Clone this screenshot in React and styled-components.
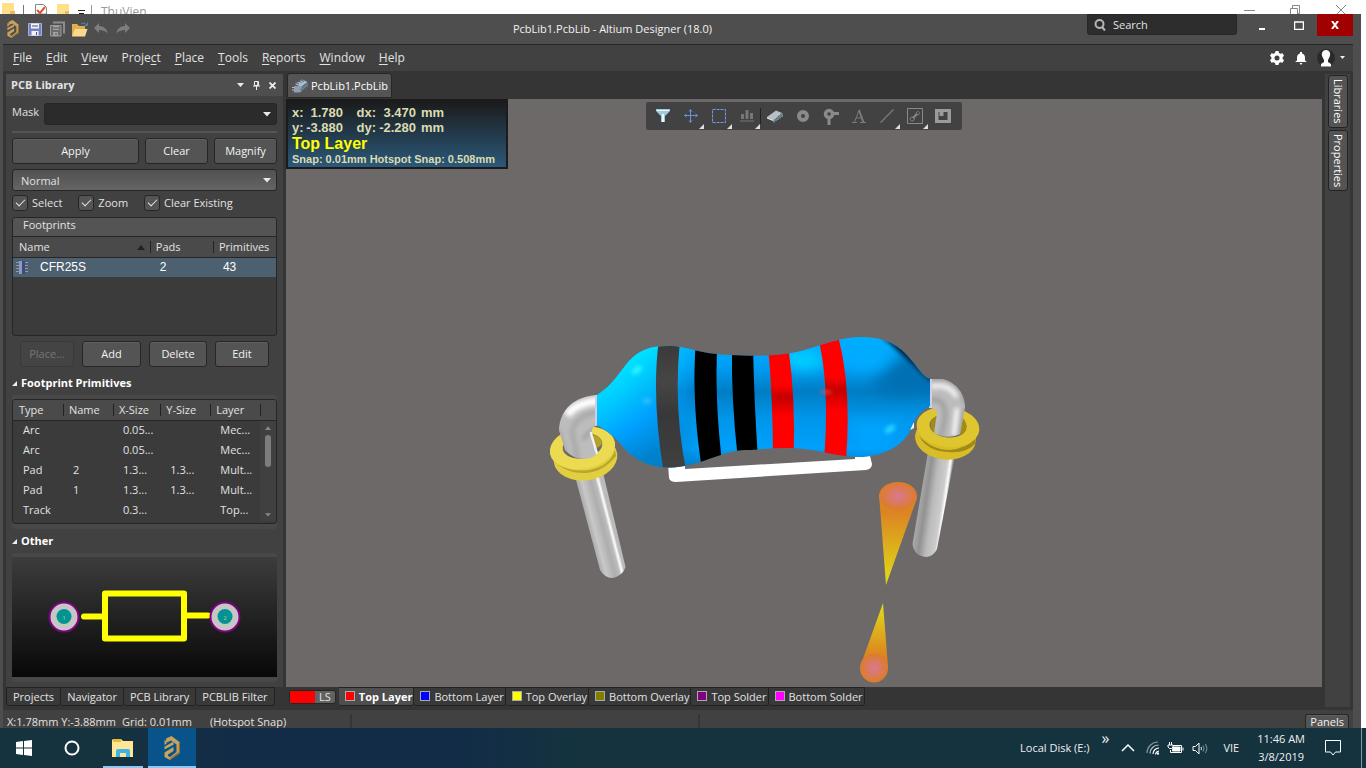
import React from "react";
import styled, { createGlobalStyle, css } from "styled-components";

const ui = `"Open Sans", "Noto Sans", sans-serif`;

const GlobalStyle = createGlobalStyle`
  * { box-sizing: border-box; }
  body { margin: 0; background: #fff; font: 11px/16px ${ui}; color: #e2e2e2; }
  button, input, select { font: inherit; color: inherit; margin: 0; }
  button { cursor: pointer; }
  svg { display: block; flex: none; }
`;

const Screen = styled.div`
  height: 100vh;
  display: flex;
  flex-direction: column;
  overflow: hidden;
`;

/* window behind */
const BackWindow = styled.div`
  height: 14px;
  flex: none;
  overflow: hidden;
  display: flex;
  align-items: flex-start;
  color: #999;
  font-size: 12px;
  line-height: 24px;
`;
const BackTools = styled.div`flex: 1; display: flex; gap: 9px; padding-left: 2px;`;
const BackControls = styled.div`display: flex; gap: 34px; padding: 5px 19px 0 0;`;

/* application window */
const Win = styled.div`
  flex: 1;
  min-height: 0;
  margin-right: 5px;
  display: flex;
  flex-direction: column;
  background: #353535;
  border: solid #4e4e4e;
  border-width: 0 8px 0 3px;
`;
const TitleBar = styled.header`
  display: flex;
  height: 31px;
  flex: none;
  background: #4e4e4e;
  border-bottom: 1px solid #262626;
`;
const QuickTools = styled.div`
  display: flex;
  align-items: center;
  gap: 4px;
  padding-left: 1px;
`;
const IconButton = styled.button`
  display: flex;
  align-items: center;
  justify-content: center;
  width: ${(p) => p.$w || 18}px;
  height: ${(p) => p.$h || 18}px;
  padding: 0;
  border: 0;
  background: ${(p) => p.$bg || "none"};
`;
const Title = styled.h1`
  flex: 1;
  margin: 0;
  padding-left: 6px;
  font-size: 11px;
  font-weight: 400;
  line-height: 30px;
  text-align: center;
  color: #f2f2f2;
`;
const SearchBox = styled.label`
  display: flex;
  align-items: center;
  gap: 7px;
  width: 150px;
  height: 21px;
  margin-right: 6px;
  padding: 0 6px;
  background: #2d2d2d;
  border: 1px solid #262626;
  border-radius: 0 0 3px 3px;
  input {
    flex: 1;
    min-width: 0;
    padding: 0;
    border: 0;
    background: none;
    outline: 0;
  }
  input::placeholder { color: #e2e2e2; opacity: 1; }
`;
const MenuBar = styled.nav`
  display: flex;
  align-items: center;
  height: 26px;
  flex: none;
  padding: 0 7px 0 10px;
  background: #414141;
`;
const MenuItem = styled.button`
  padding: 0;
  margin-right: 14px;
  border: 0;
  background: none;
  font-size: 12px;
  u { text-underline-offset: 2px; }
`;
const MenuRight = styled.div`
  display: flex;
  align-items: center;
  gap: 6px;
  margin-left: auto;
`;
const Work = styled.div`flex: 1; min-height: 0; display: flex;`;

/* left dock */
const LeftDock = styled.aside`
  display: flex;
  flex-direction: column;
  width: 280px;
  flex: none;
  padding: 3px 0 4px 3px;
`;
const Panel = styled.section`
  flex: 1;
  min-height: 0;
  display: flex;
  flex-direction: column;
  background: #414141;
`;
const PanelHeader = styled.header`
  display: flex;
  align-items: center;
  height: 22px;
  padding: 0 3px 0 5px;
  background: #4e4e4e;
  h2 { flex: 1; margin: 0; font-size: 11px; font-weight: 700; }
`;
const PanelBody = styled.div`
  flex: 1;
  min-height: 0;
  display: flex;
  flex-direction: column;
  padding: 7px 6px 5px;
`;
const FieldRow = styled.label`
  display: flex;
  align-items: flex-start;
  gap: 5px;
  height: 22px;
  line-height: 18px;
`;
const Combo = styled.div`
  position: relative;
  flex: 1;
  display: flex;
  svg { position: absolute; right: 6px; top: 9px; pointer-events: none; }
`;
const fieldStyle = css`
  width: 100%;
  height: 22px;
  border: 1px solid #262626;
  border-radius: 3px;
  outline: 0;
`;
const MaskInput = styled.input`${fieldStyle} background: #2b2b2b;`;
const ModeSelect = styled.select`
  ${fieldStyle}
  appearance: none;
  padding: 2px 8px 0;
  background: linear-gradient(#515151, #646464);
`;
const Rule = styled.hr`
  width: 100%;
  height: 2px;
  margin: 6px 0 5px;
  border: 0;
  background: #555;
`;
const Buttons = styled.div`
  display: grid;
  grid-template-columns: ${(p) => p.$cols};
  gap: ${(p) => p.$gap}px;
  margin-bottom: 5px;
`;
const FootActions = styled(Buttons)`margin: 5px 0 4px; padding: 0 8px;`;
const Button = styled.button`
  height: 26px;
  padding: 0;
  border: 1px solid #262626;
  border-radius: 3px;
  background: #545454;
  box-shadow: inset 0 1px #606060;
  color: #f2f2f2;
  &:disabled { background: #444; box-shadow: none; border-color: #393939; color: #777; }
`;
const Checks = styled.div`
  display: flex;
  gap: 16px;
  margin: 4px 0 6px;
`;
const Check = styled.label`
  display: flex;
  align-items: center;
  gap: 4px;
  line-height: 18px;
  height: 16px;
  input {
    appearance: none;
    width: 16px;
    height: 16px;
    border: 1px solid #262626;
    border-radius: 3px;
    background: #545454;
  }
  input:checked::after {
    content: "";
    display: block;
    width: 4px;
    height: 8px;
    margin: 1px 0 0 5px;
    border: solid #e2e2e2;
    border-width: 0 1px 1px 0;
    transform: rotate(45deg);
  }
`;
const ListBox = styled.div`
  height: ${(p) => p.$h}px;
  flex: none;
  border: 1px solid #262626;
  border-radius: 3px;
  background: #3b3b3b;
  overflow: hidden;
`;
const ListTitle = styled.h3`
  height: 19px;
  margin: 0;
  padding-left: 10px;
  background: #545454;
  border-bottom: 1px solid #262626;
  font-size: 11px;
  font-weight: 400;
  line-height: 14px;
`;
const Grid = styled.table`
  width: 100%;
  border-collapse: collapse;
  table-layout: fixed;
  th, td {
    height: 20px;
    padding: 0 0 0 10px;
    font-weight: 400;
    text-align: left;
    white-space: nowrap;
  }
  th { padding: 0 0 0 6px; }
  thead tr { background: #4a4a4a; border-bottom: 1px solid #262626; }
  th + th { background: linear-gradient(#222, #222) 0 4px / 1px 12px no-repeat; }
  th svg { float: right; margin: 6px 5px 0 0; }
`;
const SelectedRow = styled.tr`
  background: #4d6070;
  color: #fff;
  font: 12px/16px "Liberation Sans", sans-serif;
`;
const NameCell = styled.div`display: flex; align-items: center; gap: 11px; margin-left: -8px;`;
const ScrollCell = styled.td`
  && { padding: 4px 2px; vertical-align: top; background: #404040; }
`;
const ScrollTrack = styled.div`
  display: flex;
  flex-direction: column;
  align-items: center;
  gap: 5px;
  height: 92px;
  padding-top: 1px;
  svg:last-child { margin-top: auto; }
`;
const Thumb = styled.div`width: 6px; height: 32px; border-radius: 3px; background: #7d7d7d;`;
const SectionTitle = styled.h3`
  display: flex;
  align-items: center;
  gap: 4px;
  height: 22px;
  flex: none;
  margin: 1px 0;
  color: #fff;
  font-size: 11px;
  font-weight: 700;
`;
const Group = styled.div`
  flex: ${(p) => (p.$grow ? "1" : "none")};
  min-height: 0;
  display: flex;
  flex-direction: column;
  padding: 4px 0 5px;
  border-radius: 3px;
  background: #484848;
`;
const Preview = styled.div`
  flex: 1;
  min-height: 0;
  background: linear-gradient(#3c3c3c, #080808);
  svg { width: 100%; height: 100%; }
`;
const DockTabs = styled.div`display: flex;`;
const DockTab = styled.button`
  height: 19px;
  padding: 0 6px;
  border: 1px solid #222;
  border-left-width: ${(p) => (p.$first ? 1 : 0)}px;
  border-radius: 0 0 3px 3px;
  background: #393939;
  line-height: 16px;
`;

/* document area */
const Document = styled.main`flex: 1; min-width: 0; display: flex; flex-direction: column; margin-left: 3px;`;
const FileTabs = styled.div`display: flex; align-items: flex-end; height: 28px; flex: none;`;
const FileTab = styled.button`
  display: flex;
  align-items: center;
  gap: 2px;
  height: 25px;
  margin: 0 0 1px 1px;
  padding: 0 3px 0 4px;
  border: 1px solid #262626;
  border-radius: 3px 3px 0 0;
  background: #545454;
  color: #fff;
`;
const Canvas = styled.div`
  position: relative;
  flex: 1;
  min-height: 0;
  background: #6d6968;
`;
const Model = styled.svg`position: absolute; inset: 0; width: 100%; height: 100%;`;
const Hud = styled.div`
  position: absolute;
  left: 0;
  top: 0;
  width: 222px;
  padding: 4px 3px 2px 4px;
  border: 2px solid #1b1b1b;
  background: linear-gradient(#1b1b1b, #2b587a);
  color: #dcdcaf;
  font: 700 13px/15px "Liberation Sans", sans-serif;
`;
const Coords = styled.div`
  display: grid;
  grid-template-columns: 12px 39px 33px 40px 30px;
  span:nth-child(5n + 2), span:nth-child(5n + 3), span:nth-child(5n + 4) { text-align: right; }
  span:nth-child(5n) { padding-left: 5px; }
`;
const HudLayer = styled.div`font-size: 16px; line-height: 18px; color: #ff0;`;
const HudSnap = styled.div`font-size: 11px; line-height: 12px; white-space: nowrap;`;
const ActiveBar = styled.div`
  position: absolute;
  left: 50%;
  top: 3px;
  display: flex;
  transform: translateX(-50%);
  padding: 0 5px 0 3px;
  border-radius: 2px;
  background: #424242;
`;
const Tool = styled.button`
  position: relative;
  display: flex;
  align-items: center;
  justify-content: center;
  width: 28px;
  height: 28px;
  padding: 0;
  border: 0;
  background: ${(p) => (p.$divide ? "linear-gradient(#222, #222) 100% 6px / 1px 16px no-repeat" : "none")};
  ${(p) => p.$more && css`
    &::after {
      content: "";
      position: absolute;
      right: 1px;
      bottom: 1px;
      width: 5px;
      height: 5px;
      background: #ddd;
      clip-path: polygon(100% 0, 100% 100%, 0 100%);
    }
  `}
`;
const LayerBar = styled.div`display: flex; height: 23px; flex: none; padding-left: 3px;`;
const LayerSet = styled.button`
  display: flex;
  height: 14px;
  margin: 3px 3px 0 0;
  padding: 0;
  border: 1px solid #262626;
  border-radius: 3px;
  background: #626262;
  line-height: 12px;
  overflow: hidden;
  &::before { content: ""; width: 25px; height: 12px; background: #f00; }
  span { padding: 0 4px; }
`;
const LayerTab = styled.button`
  display: flex;
  align-items: center;
  gap: 4px;
  height: 19px;
  padding: 0 1px 0 6px;
  border: 1px solid #222;
  border-width: 1px 1px 1px 0;
  border-radius: 0 0 3px 3px;
  background: ${(p) => (p.$active ? "#4e4e4e" : "#393939")};
  color: ${(p) => (p.$active ? "#fff" : "#e2e2e2")};
  font-weight: ${(p) => (p.$active ? 700 : 400)};
  white-space: nowrap;
  &::before {
    content: "";
    box-sizing: border-box;
    width: 10px;
    height: 10px;
    margin-bottom: 2px;
    border: 1px solid #aaa;
    background: ${(p) => p.$color};
  }
`;

/* right dock and status */
const RightDock = styled.aside`
  display: flex;
  flex-direction: column;
  align-items: center;
  gap: 2px;
  width: 25px;
  flex: none;
  margin: 3px;
  padding-top: 1px;
  background: #414141;
`;
const SideTab = styled.button`
  width: 20px;
  padding: 3px 0;
  border: 1px solid #222;
  border-radius: 3px;
  background: #545454;
  color: #fff;
  line-height: 16px;
  writing-mode: vertical-rl;
`;
const StatusBar = styled.footer`
  display: flex;
  height: 18px;
  flex: none;
  padding-left: 4px;
  background: #414141;
  line-height: 24px;
  overflow: hidden;
`;
const StatusText = styled.span`width: ${(p) => p.$w}px; white-space: nowrap;`;
const StatusCell = styled.div`
  width: ${(p) => p.$w}px;
  height: 14px;
  margin-top: 4px;
  border-left: 2px solid #353535;
`;
const PanelsButton = styled(Button)`
  height: 14px;
  margin: 4px 4px 0 auto;
  padding: 0 4px;
  border-bottom: 0;
  border-radius: 3px 3px 0 0;
  line-height: 13px;
`;

/* desktop taskbar */
const Taskbar = styled.footer`
  display: flex;
  align-items: center;
  height: 40px;
  flex: none;
  background: linear-gradient(90deg, #15323f 0, #15323f 8%, #122c47 17%, #122c47 34%, #14333f 42%, #14333f);
  color: #f0f0f0;
`;
const TaskButton = styled.button`
  display: flex;
  align-items: center;
  justify-content: center;
  width: 48px;
  height: 40px;
  padding: 0;
  border: 0;
  background: ${(p) => (p.$active ? "#07538a" : "none")};
  box-shadow: ${(p) => (p.$open ? "inset 0 -2px #8fc7f0" : "none")};
`;
const OpenTask = styled(TaskButton)`width: 40px; margin: 0 5px 0 7px;`;
const Tray = styled.div`display: flex; align-items: center; gap: 8px; margin-left: auto;`;
const Chevrons = styled.span`height: 37px; margin: 0 4px; font-size: 16px; line-height: 16px;`;
const Language = styled.span`margin-left: 6px;`;
const Clock = styled.time`margin: 0 12px 0 10px; text-align: center; line-height: 18px;`;
const TrayEnd = styled.div`width: 5px; height: 40px; margin-left: 12px; border-left: 1px solid #8a989e;`;

const Caret = ({ up, c = "#e8e8e8", w = 8 }) => (
  <svg width={w} height={w / 2 + 1} viewBox="0 0 8 5" fill={c}><path d={up ? "M0 5 4 0l4 5z" : "M0 0h8L4 4.6z"} /></svg>
);
const Fold = () => <svg width="5" height="5" fill="#eee"><path d="M5 0v5H0z" /></svg>;
const AltiumMark = ({ size = 16 }) => (
  <svg width={size} height={size} viewBox="0 0 24 24" fill="#c9a35b">
    <path d="M6 2.500 11.500 0 20 6.500V17L10 24l-5.500-3v-4.500l9-5.500v4l-5.500 3.500v1.500l2 1 6.500-5V8.500L11 4.500 6.500 6.800z" />
    <path d="M4.500 4v5l2-1.300V5zM4.500 13.500v-2.800L13.500 5.500v3.300z" />
    <path d="m20 6.500-1.200.6V16L10 22.300V24l10-7z" fill="#8e6f36" />
  </svg>
);
const Folder = () => (
  <svg width="17" height="15" viewBox="0 0 17 15"><path d="M1 2h5l2 2h6v10H1z" fill="#e2ae4e" /><path d="M4 7h12.500L14 14.500H1z" fill="#f9d98c" /><path d="M10 2q3-2.500 6 1M16.500.5v3h-3" fill="none" stroke="#4a86b8" /></svg>
);
const Save = ({ multi }) => (
  <svg width="16" height="16" viewBox="0 0 16 16">
    {multi && <path d="M4 1.500h11v11" fill="none" stroke="#8d8d8d" strokeWidth="2" />}
    <path d={multi ? "M1.500 4.500h10.500v10.500H1.500z" : "M1.500 2.500h13v12h-13z"} fill={multi ? "#6c6c6c" : "#7181c2"} stroke={multi ? "#999" : "#a4aedd"} />
    <path d={multi ? "M4 5h6v4H4zM4 11h5v4H4z" : "M4 2.500h8v5H4zM4.500 10h7v4.500h-7z"} fill={multi ? "#a2a2a2" : "#f2f2fb"} />
    <path d={multi ? "M4 7h6M7 12v2" : "M5 5h6M9.500 11v3"} stroke="#555" />
  </svg>
);
const Chip = () => (
  <svg width="16" height="15" viewBox="0 0 16 15"><path d="M0 8 9 1.500l6 2.500-8 7z" fill="#b9c0c4" /><path d="M0 8v1.500l6 2.500 1-1z" fill="#e6eaec" /><path d="M7 11v2.500M9 9.500V12M11 8v3M13 6v3.500M15 4.500V8" stroke="#8fc2dc" /></svg>
);
const LibraryDoc = () => (
  <svg width="17" height="16" viewBox="0 0 17 16"><path d="M3 6 10 1.500l5.500 2.500L9 9z" fill="#a8bccb" /><path d="M4 4.500l3 1.500M6.500 3l3 1.500M9 2l3 1.500" stroke="#4e5f70" /><path d="M9 9v4M11 8v4M13 6.500v4M15 5v4" stroke="#6f93b0" strokeWidth="1.200" /><path d="M2 8h6v6.500H2z" fill="#8fa0b5" /><path d="M0 9.500h2M0 12h2M8 10h1.500M8 13h1.500" stroke="#bbb" /></svg>
);

const MENU = [["", "F", "ile"], ["", "E", "dit"], ["", "V", "iew"], ["Proje", "c", "t"], ["", "P", "lace"], ["", "T", "ools"], ["", "R", "eports"], ["", "W", "indow"], ["", "H", "elp"]];
const PRIMITIVES = [
  ["Arc", "", "0.05...", "", "Mec..."],
  ["Arc", "", "0.05...", "", "Mec..."],
  ["Pad", "2", "1.3...", "1.3...", "Mult..."],
  ["Pad", "1", "1.3...", "1.3...", "Mult..."],
  ["Track", "", "0.3...", "", "Top..."],
];
const LAYERS = [["Top Layer", "#f00"], ["Bottom Layer", "#00f"], ["Top Overlay", "#ff0"], ["Bottom Overlay", "#808000"], ["Top Solder", "#800080"], ["Bottom Solder", "#f0f"]];

const TOOLS = [
  { name: "Filter", art: <svg width="14" height="14" viewBox="0 0 14 14"><path d="M0 0h14v2L9 7v6H5V7L0 2z" fill="#9fcbdc" /><path d="M6 5h2v8H6zM1 1h12v1H1z" fill="#e9f6fb" /></svg> },
  { name: "Snap", more: true, art: <svg width="14" height="14" viewBox="0 0 14 14" fill="none" stroke="#6b8fe0"><path d="M6.500 1v12M.5 6.500h13M5 2.500l1.500-2L8 2.500M5 11.500l1.500 2 1.500-2M2.500 5l-2 1.500 2 1.500M11.500 5l2 1.500-2 1.500" /></svg> },
  { name: "Selection", more: true, art: <svg width="14" height="14"><rect x=".5" y=".5" width="13" height="13" fill="none" stroke="#7297ee" strokeDasharray="3 1" /></svg> },
  { name: "Align", more: true, divide: true, art: <svg width="14" height="12" fill="#777"><path d="M1 4h3v5H1zM5.500 0h3v9h-3zM10 3h3v6h-3zM0 10.500h14v1H0z" /></svg> },
  { name: "Component", art: <Chip /> },
  { name: "Pad", art: <svg width="14" height="14"><circle cx="7" cy="7" r="4" fill="none" stroke="#8a8a8a" strokeWidth="4" /></svg> },
  { name: "Via", art: <svg width="16" height="17"><circle cx="6" cy="6" r="3.500" fill="none" stroke="#8a8a8a" strokeWidth="3.500" /><path d="M10 5.500h6M6 10v7" stroke="#8a8a8a" strokeWidth="3" /></svg> },
  { name: "String", art: <svg width="14" height="14" fill="none" stroke="#7b7b7b"><path d="M0 13.500h5M8 13.500h6M2.500 13 7 1.500M4 9h6" /><path d="M7 1l4.500 12.500" strokeWidth="2" /></svg> },
  { name: "Line", more: true, art: <svg width="14" height="14"><path d="M.5 13.500l13-13" stroke="#777" strokeWidth="1.500" /></svg> },
  { name: "Dimension", more: true, art: <svg width="16" height="16" fill="none" stroke="#8a8a8a"><path d="M.5.5h15v15H.5z" /><path d="m6 10 4-4" strokeWidth="2" /><path d="M9.500 6.500a2 2 0 0 1 2-3M9.500 6.500a2 2 0 0 0 3-2M6.500 9.500a2 2 0 1 0 .2.200" /></svg> },
  { name: "Region", art: <svg width="16" height="14"><path d="M0 0h16v14H0zM3.500 3v8h9V3h-4v4h-4V3z" fillRule="evenodd" fill="#9b9b9b" /></svg> },
];

const BODY = "M597 395C613 385 620 371 629 361C639 350 650 346 668 346C690 346 697 354 730 355C765 357 788 355 808 349C830 342 843 337 862 337C885 337 900 345 912 361C920 371 925 378 930 379L930 406C918 412 914 421 909 433C900 447 882 457 858 457C835 457 815 448 790 448C768 448 760 450 746 450C722 450 700 467 670 467.500C645 467 631 457 620 443C611 433 603 429 597 425Z";
const BEND_L = "M598 395C575 396 560 409 559 430L565 450Q573 459 585 459 594 458 598 453L592 433Q591 426 598 425Z";
const BEND_R = "M929 379 942 379C957 382 965 395 965 407L960 434Q948 440 934 433L937 413Q935 408 929 408Z";

const Resistor = () => (
  <Model viewBox="286 99 1036 588" role="img" aria-label="3D view of resistor footprint">
    <defs>
      <linearGradient id="blue" x1="0" y1="0" x2="0" y2="1">
        <stop offset="0" stopColor="#00b0ff" /><stop offset=".22" stopColor="#009ef5" /><stop offset=".42" stopColor="#007dc4" />
        <stop offset=".62" stopColor="#0096ea" /><stop offset=".85" stopColor="#00a0fb" /><stop offset="1" stopColor="#007fc8" />
      </linearGradient>
      <linearGradient id="lobe" gradientUnits="userSpaceOnUse" x1="600" y1="375" x2="650" y2="455">
        <stop offset="0" stopColor="#00e8ff" /><stop offset=".3" stopColor="#00caff" /><stop offset=".65" stopColor="#00a0ff" /><stop offset="1" stopColor="#0080ca" />
      </linearGradient>
      <linearGradient id="fade" gradientUnits="userSpaceOnUse" x1="620" y1="0" x2="700" y2="0">
        <stop offset="0" stopColor="#fff" /><stop offset=".5" stopColor="#ddd" /><stop offset="1" stopColor="#000" />
      </linearGradient>
      <mask id="lobeMask"><rect x="590" y="330" width="120" height="150" fill="url(#fade)" /></mask>
      <linearGradient id="red" x1="0" y1="0" x2="0" y2="1">
        <stop offset=".35" stopColor="#f00" /><stop offset=".45" stopColor="#c40000" /><stop offset=".62" stopColor="#f00" />
      </linearGradient>
      <linearGradient id="grey" x1="0" y1="0" x2="0" y2="1">
        <stop offset="0" stopColor="#383838" /><stop offset=".3" stopColor="#464646" /><stop offset=".55" stopColor="#383838" /><stop offset="1" stopColor="#414141" />
      </linearGradient>
      <linearGradient id="legL" gradientUnits="userSpaceOnUse" x1="579" y1="508" x2="606" y2="501">
        <stop offset="0" stopColor="#ddd" /><stop offset=".12" stopColor="#a5a5a5" /><stop offset=".35" stopColor="#c8c8c8" /><stop offset=".65" stopColor="#aeaeae" /><stop offset=".82" stopColor="#bbb" /><stop offset=".92" stopColor="#fff" /><stop offset="1" stopColor="#bbb" />
      </linearGradient>
      <linearGradient id="legR" gradientUnits="userSpaceOnUse" x1="919" y1="500" x2="947" y2="504">
        <stop offset="0" stopColor="#aaa" /><stop offset=".25" stopColor="#929292" /><stop offset=".5" stopColor="#bbb" /><stop offset=".8" stopColor="#ccc" /><stop offset=".92" stopColor="#fff" /><stop offset="1" stopColor="#999" />
      </linearGradient>
      <linearGradient id="coneA" x1="0" y1="0" x2="0" y2="1"><stop offset=".2" stopColor="#dc8422" /><stop offset="1" stopColor="#e0de18" /></linearGradient>
      <linearGradient id="coneB" x1="0" y1="1" x2="0" y2="0"><stop offset=".1" stopColor="#dc7c22" /><stop offset="1" stopColor="#e0de18" /></linearGradient>
      <radialGradient id="tip"><stop offset="0" stopColor="#d97894" /><stop offset="1" stopColor="#dc7c28" /></radialGradient>
      <clipPath id="bodyClip"><path d={BODY} /></clipPath>
      <clipPath id="bendLClip"><path d={BEND_L} /></clipPath>
      <clipPath id="bendRClip"><path d={BEND_R} /></clipPath>
      <filter id="soft" x="-50%" y="-50%" width="200%" height="200%"><feGaussianBlur stdDeviation="7" /></filter>
      <filter id="softer" x="-50%" y="-50%" width="200%" height="200%"><feGaussianBlur stdDeviation="2" /></filter>
    </defs>

    <path d="M668 464 669 478Q670 482 676 482L866 470Q872 469 872 464L870 456 855 457V459L685 469V464Z" fill="#fff" />
    <path d="M909 429 914 422V428L910 430Z" fill="#fff" />

    {/* left leg and pad */}
    <path d="M572 465 600 570Q605 578 612 578 623 576 625.500 567L600 460Z" fill="url(#legL)" />
    <ellipse cx="585.500" cy="458" rx="32" ry="22.500" transform="rotate(-8 585 458)" fill="#e2cf40" />
    <path d="M553 460Q567 473 589 470 610 466 615 450L616 456Q603 472 586 473 566 474 553 460Z" fill="#b9a62c" />
    <ellipse cx="582.500" cy="448" rx="33" ry="21" transform="rotate(-10 582 448)" fill="#ecdb50" />
    <ellipse cx="582.500" cy="446" rx="20" ry="12.500" transform="rotate(-10 582 446)" fill="#6d6968" />
    <path d="M590 434Q601 436 602 443 601 447 596 448L591 434Z" fill="#b5a127" />
    <path d={BEND_L} fill="#bdbdbd" />
    <g clipPath="url(#bendLClip)">
      <g filter="url(#softer)" fill="none">
        <path d="M600 401Q577 402 567 415" stroke="#fff" strokeWidth="8" />
        <path d="M600 412Q576 414 572 432L578 462" stroke="#a9a9a9" strokeWidth="5" />
        <path d="M559 430 566 455" stroke="#a0a0a0" strokeWidth="3" />
        <path d="M583 440Q588 430 600 428" stroke="#9a9a9a" strokeWidth="3" />
      </g>
      <path d="M591 432 598 456" stroke="#f2f2f2" strokeWidth="3" fill="none" />
      <path d="M595 394h4v32h-4z" fill="#d0cfea" />
    </g>

    {/* right leg and pad */}
    <path d="M928 452 912.500 544Q914 556 926 557 934 556 937 549L955 455Z" fill="url(#legR)" />
    <ellipse cx="945.500" cy="438.500" rx="30.500" ry="21" transform="rotate(6 945 438)" fill="#d8bd28" />
    <path d="M919 436Q932 450 950 450 967 448 975 439L976 443Q966 454 948 452 927 451 919 436Z" fill="#a08a18" />
    <ellipse cx="948" cy="427" rx="31.500" ry="20" transform="rotate(6 948 427)" fill="#e0c62e" />
    <ellipse cx="948" cy="426" rx="18.500" ry="11.500" transform="rotate(6 948 426)" fill="#6d6968" />
    <path d="M931 421Q938 413 938 418L934 433Q929 428 931 421ZM962 417Q968 423 966 429 964 434 960 435Z" fill="#a28c18" />
    <path d={BEND_R} fill="#bcbcbc" />
    <g clipPath="url(#bendRClip)">
      <g filter="url(#softer)" fill="none">
        <path d="M928 379H943Q960 382 965 403" stroke="#8e8e8e" strokeWidth="3" />
        <path d="M930 386H942Q952 388 957 397" stroke="#f2f2f2" strokeWidth="5" />
        <path d="M928 400H938Q946 404 945 418L940 440" stroke="#a2a2a2" strokeWidth="5" />
        <path d="M964 408 959 437" stroke="#969696" strokeWidth="3" />
        <path d="M957 408 954 436" stroke="#fff" strokeWidth="4" />
      </g>
      <path d="M928 378h4v30h-4z" fill="#d0cfea" />
    </g>

    <path d={BODY} fill="url(#blue)" />
    <g clipPath="url(#bodyClip)">
      <rect x="590" y="330" width="120" height="150" fill="url(#lobe)" mask="url(#lobeMask)" />
      <g filter="url(#soft)">
        <ellipse cx="803" cy="360" rx="22" ry="10" fill="#00d0ff" />
        <ellipse cx="862" cy="356" rx="26" ry="14" fill="#00acff" />
        <path d="M868 388 905 352 945 372V392L900 396Z" fill="#0070b2" />
        <path d="M845 422H902L870 452Z" fill="#00a4ff" />
      </g>
      <path d="M886 334Q912 358 934 378" fill="none" stroke="#00233b" strokeWidth="9" filter="url(#softer)" />
      <g filter="url(#softer)">
        <ellipse cx="637" cy="370" rx="6" ry="3" transform="rotate(-38 637 370)" fill="#30f8ff" />
        <ellipse cx="647" cy="401" rx="4" ry="3" fill="#35c0ff" />
        <ellipse cx="890" cy="429" rx="6" ry="3" transform="rotate(-35 890 429)" fill="#28ddff" />
      </g>
      <path d="M659 340Q651 395 664 475H687Q673 410 680 340Z" fill="url(#grey)" />
      <path d="M696 340Q691 400 702 470H723Q714 400 717.500 340Z" />
      <path d="M732 345Q731 400 738 460H758Q754 400 753 345Z" />
      <path d="M768 345Q773 400 773 460H793.500Q796 400 788 345Z" fill="url(#red)" />
      <path d="M818 337Q830 385 824 460H846Q852 385 837 332Z" fill="url(#red)" />
      <ellipse cx="826" cy="392" rx="6" ry="2" fill="#ff5a5a" opacity=".6" filter="url(#softer)" />
    </g>

    <path d="M879 494 886 585 917 498Z" fill="url(#coneA)" />
    <ellipse cx="898" cy="496" rx="19" ry="14" fill="url(#tip)" />
    <path d="M883 603 860 667H888Z" fill="url(#coneB)" />
    <ellipse cx="874" cy="668" rx="14" ry="14.500" fill="url(#tip)" />
  </Model>
);

export default function App() {
  return (
    <Screen>
      <GlobalStyle />
      <BackWindow>
        <BackTools>
          <svg width="90" height="14" viewBox="0 0 90 14">
            <path d="M0 3h12v11H0z" fill="#ffe08a" /><path d="M8 11h5v3H8z" fill="#e9bd55" />
            <path d="M21.500 5v9" stroke="#777" />
            <path d="M33.500 4.500h8l3 3V14h-11z" fill="#fff" stroke="#888" /><path d="m35 10 3 3 5-6" fill="none" stroke="#e0522c" strokeWidth="2" />
            <path d="M55 4h12v10H55z" fill="#ffe08a" /><path d="M63 11h4v3h-4z" fill="#e9bd55" />
            <path d="M76 10.500h7M77 13.500h5" stroke="#222" />
            <path d="M89.500 5v9" stroke="#999" />
          </svg>
          <span>ThuVien</span>
        </BackTools>
        <BackControls>
          <svg width="12" height="10" stroke="#888"><path d="M1 5.500h11" /></svg>
          <svg width="12" height="10" fill="none" stroke="#888"><path d="M1.500 3.500h7v7h-7zM3.500 3V.5h7v8H9" /></svg>
          <svg width="12" height="10" stroke="#888"><path d="m1 0 10 10M11 0 1 10" /></svg>
        </BackControls>
      </BackWindow>

      <Win>
        <TitleBar>
          <QuickTools>
            <AltiumMark size={18} />
            <IconButton aria-label="Save"><Save /></IconButton>
            <IconButton aria-label="Save all"><Save multi /></IconButton>
            <IconButton aria-label="Open"><Folder /></IconButton>
            <IconButton aria-label="Undo"><svg width="14" height="12" viewBox="0 0 14 12"><path d="M5 0v3c5 0 8 3 9 8-2-3-5-4-9-4v3L0 5z" fill="#7d7d7d" /></svg></IconButton>
            <IconButton aria-label="Redo"><svg width="14" height="12" viewBox="0 0 14 12"><path d="M9 0v3C4 3 1 6 0 11c2-3 5-4 9-4v3l5-5z" fill="#7d7d7d" /></svg></IconButton>
          </QuickTools>
          <Title>PcbLib1.PcbLib - Altium Designer (18.0)</Title>
          <SearchBox>
            <svg width="12" height="12" viewBox="0 0 12 12" fill="none" stroke="#b5b5b5" strokeWidth="2"><circle cx="5.500" cy="5" r="4" /><path d="m8 8 3 3.500" /></svg>
            <input type="search" placeholder="Search" aria-label="Search" />
          </SearchBox>
          <IconButton $w={38} $h={22} aria-label="Minimize"><svg width="6" height="16"><path d="M0 11h6v2H0z" fill="#fff" /></svg></IconButton>
          <IconButton $w={36} $h={22} aria-label="Maximize"><svg width="10" height="9"><path d="M.5 1h9v7.500h-9z" fill="none" stroke="#fff" strokeWidth="1.500" /></svg></IconButton>
          <IconButton $w={36} $h={22} $bg="#a00000" aria-label="Close"><svg width="8" height="8"><path d="m1 0 6 8M7 0 1 8" stroke="#fff" strokeWidth="2" /></svg></IconButton>
        </TitleBar>

        <MenuBar>
          {MENU.map(([a, b, c]) => <MenuItem key={a + b + c}>{a}<u>{b}</u>{c}</MenuItem>)}
          <MenuRight>
            <IconButton aria-label="Settings">
              <svg width="14" height="14" viewBox="0 0 14 14"><path d="M5.500 0h3l.5 2 1.500.8 2-.6L14 4.700 12.600 6.200v1.600L14 9.300l-1.500 2.500-2-.6L9 12l-.5 2h-3L5 12l-1.500-.8-2 .6L0 9.300l1.400-1.500V6.200L0 4.700l1.500-2.500 2 .6L5 2zM7 4.500A2.500 2.500 0 1 0 7 9.500 2.500 2.500 0 1 0 7 4.500z" fill="#fff" /></svg>
            </IconButton>
            <IconButton aria-label="Notifications">
              <svg width="12" height="13" viewBox="0 0 12 13" fill="#fff"><path d="M5 0h2v1.500c2 .5 3 2 3 4.500v2.500L12 10H0l2-1.500V6c0-2.500 1-4 3-4.500zM4.500 11h3L6 13z" /></svg>
            </IconButton>
            <IconButton $w={30} aria-label="Account">
              <svg width="28" height="18"><circle cx="9" cy="9" r="9" fill="#2a2a2a" /><path d="M9 1c4 0 5 4 3.500 7L11 11v2l3 2v2.500H4V15l3-2v-2L5.500 8C4 5 5 1 9 1z" fill="#fff" /><path d="M23 7h5l-2.500 3z" fill="#eee" /></svg>
            </IconButton>
          </MenuRight>
        </MenuBar>

        <Work>
          <LeftDock>
            <Panel>
              <PanelHeader>
                <h2>PCB Library</h2>
                <IconButton $w={16} aria-label="Panel menu"><Caret w={7} /></IconButton>
                <IconButton $w={16} aria-label="Pin"><svg width="7" height="9"><path d="M1.500.5h4v4h-4zM0 5h7M3.500 5v4M4.700 1v3" stroke="#eee" fill="none" /></svg></IconButton>
                <IconButton $w={16} aria-label="Close panel"><svg width="7" height="7"><path d="m.5.5 6 6M6.500.5l-6 6" stroke="#eee" strokeWidth="1.800" /></svg></IconButton>
              </PanelHeader>
              <PanelBody>
                <FieldRow>Mask<Combo><MaskInput type="text" aria-label="Mask" /><Caret /></Combo></FieldRow>
                <Rule />
                <Buttons $cols="127fr 63fr 63fr" $gap={6}>
                  <Button>Apply</Button><Button>Clear</Button><Button>Magnify</Button>
                </Buttons>
                <FieldRow><Combo><ModeSelect aria-label="Mode"><option>Normal</option></ModeSelect><Caret /></Combo></FieldRow>
                <Checks>
                  <Check><input type="checkbox" defaultChecked />Select</Check>
                  <Check><input type="checkbox" defaultChecked />Zoom</Check>
                  <Check><input type="checkbox" defaultChecked />Clear Existing</Check>
                </Checks>
                <ListBox $h={119}>
                  <ListTitle>Footprints</ListTitle>
                  <Grid>
                    <colgroup><col width="52%" /><col width="24%" /><col width="24%" /></colgroup>
                    <thead><tr><th>Name<Caret up c="#222" /></th><th>Pads</th><th>Primitives</th></tr></thead>
                    <tbody>
                      <SelectedRow>
                        <td><NameCell>
                          <svg width="14" height="13" viewBox="0 0 14 13"><path d="M1 1.500h12M1 4.500h12M1 7.500h12M1 10.500h12" stroke="#8d98a8" /><path d="M4 0h6v13H4z" fill="#3c4a7c" /><path d="M4 0h3v13H4z" fill="#8e9ac6" /></svg>
                          CFR25S
                        </NameCell></td>
                        <td>2</td><td>43</td>
                      </SelectedRow>
                    </tbody>
                  </Grid>
                </ListBox>
                <FootActions $cols="54fr 59fr 58fr 54fr" $gap={8}>
                  <Button disabled>Place...</Button><Button>Add</Button><Button>Delete</Button><Button>Edit</Button>
                </FootActions>
                <SectionTitle><Fold />Footprint Primitives</SectionTitle>
                <Group>
                  <ListBox $h={125}>
                    <Grid>
                      <colgroup><col width="19%" /><col width="19%" /><col width="18%" /><col width="19%" /><col width="19%" /><col width="6%" /></colgroup>
                      <thead><tr><th>Type</th><th>Name</th><th>X-Size</th><th>Y-Size</th><th>Layer</th><th aria-label="Scroll" /></tr></thead>
                      <tbody>
                        {PRIMITIVES.map((row, i) => (
                          <tr key={i}>
                            {row.map((v, j) => <td key={j}>{v}</td>)}
                            {i === 0 && <ScrollCell rowSpan={5}><ScrollTrack><Caret up w={6} c="#888" /><Thumb /><Caret w={6} c="#888" /></ScrollTrack></ScrollCell>}
                          </tr>
                        ))}
                      </tbody>
                    </Grid>
                  </ListBox>
                </Group>
                <SectionTitle><Fold />Other</SectionTitle>
                <Group $grow>
                  <Preview>
                    <svg viewBox="12 558 265 119" fill="none" stroke="#ff0">
                      <path d="M84 617h20M187 616h21" strokeWidth="6" strokeLinecap="round" />
                      <rect x="105" y="594" width="79" height="45" strokeWidth="6" strokeLinejoin="round" />
                      {[[64, 1], [225, 2]].map(([x, n]) => (
                        <g key={n}>
                          <circle cx={x} cy="617.500" r="14.500" fill="#c6c6c6" stroke="#800080" strokeWidth="2" />
                          <circle cx={x} cy="617" r="7.500" fill="#009494" stroke="none" />
                          <text x={x} y="620" textAnchor="middle" fontSize="6" fill="#c8c06c" stroke="none">{n}</text>
                        </g>
                      ))}
                    </svg>
                  </Preview>
                </Group>
              </PanelBody>
            </Panel>
            <DockTabs>
              <DockTab $first>Projects</DockTab><DockTab>Navigator</DockTab><DockTab>PCB Library</DockTab><DockTab>PCBLIB Filter</DockTab>
            </DockTabs>
          </LeftDock>

          <Document>
            <FileTabs><FileTab><LibraryDoc />PcbLib1.PcbLib</FileTab></FileTabs>
            <Canvas>
              <Resistor />
              <Hud>
                <Coords>
                  <span>x:</span><span>1.780</span><span>dx:</span><span>3.470</span><span>mm</span>
                  <span>y:</span><span>-3.880</span><span>dy:</span><span>-2.280</span><span>mm</span>
                </Coords>
                <HudLayer>Top Layer</HudLayer>
                <HudSnap>Snap: 0.01mm Hotspot Snap: 0.508mm</HudSnap>
              </Hud>
              <ActiveBar role="toolbar">
                {TOOLS.map((t) => <Tool key={t.name} aria-label={t.name} $more={t.more} $divide={t.divide}>{t.art}</Tool>)}
              </ActiveBar>
            </Canvas>
            <LayerBar>
              <LayerSet><span>LS</span></LayerSet>
              {LAYERS.map(([n, c], i) => <LayerTab key={n} $color={c} $active={i === 0}>{n}</LayerTab>)}
            </LayerBar>
          </Document>

          <RightDock><SideTab>Libraries</SideTab><SideTab>Properties</SideTab></RightDock>
        </Work>

        <StatusBar>
          <StatusText $w={115}>X:1.78mm Y:-3.88mm</StatusText>
          <StatusText $w={88}>Grid: 0.01mm</StatusText>
          <StatusText $w={140}>(Hotspot Snap)</StatusText>
          <StatusCell $w={348} /><StatusCell $w={100} />
          <PanelsButton>Panels</PanelsButton>
        </StatusBar>
      </Win>

      <Taskbar>
        <TaskButton aria-label="Start"><svg width="16" height="16" fill="#fff"><path d="M0 2l7-1v6.500H0zM8 1l8-1v7.500H8zM0 8.500h7V15l-7-1zM8 8.500h8V16l-8-1z" /></svg></TaskButton>
        <TaskButton aria-label="Cortana"><svg width="16" height="16"><circle cx="8" cy="8" r="6.500" fill="none" stroke="#fff" strokeWidth="2" /></svg></TaskButton>
        <OpenTask $open aria-label="File Explorer">
          <svg width="22" height="19" viewBox="0 0 22 19"><path d="M1 0h8l2 2h10v16H0V1z" fill="#ffe694" /><path d="M1 0h8v3H1z" fill="#e9b93e" /><path d="M4 18v-6q0-2 2-2h10q2 0 2 2v6h-4v-4H8v4z" fill="#3db4e8" /></svg>
        </OpenTask>
        <TaskButton $open $active aria-label="Altium Designer"><AltiumMark size={24} /></TaskButton>
        <Tray>
          <span>Local Disk (E:)</span>
          <Chevrons>»</Chevrons>
          <svg width="14" height="8" fill="none" stroke="#fff" strokeWidth="1.500"><path d="m1 7 6-6 6 6" /></svg>
          <svg width="16" height="14" viewBox="-3 0 16 14" fill="none" strokeWidth="1.200">
            <path d="M1 12A11 11 0 0 1 12 1" stroke="#81929a" /><path d="M4 12.500A8.500 8.500 0 0 1 12.500 4" stroke="#b5c0c5" /><path d="M7 13a6 6 0 0 1 6-6M9.500 13.500A4 4 0 0 1 13 10" stroke="#fff" /><circle cx="12" cy="12.500" r="1.200" fill="#fff" />
          </svg>
          <svg width="17" height="12" viewBox="0 0 17 12" fill="none" stroke="#fff"><path d="M6 3.500h8.500v7h-11V8M16 5.500v3M1 3h5v2L4.500 6.500h-2L1 5zM2.500 3V0M4.500 3V0" /><path d="M6 5h7v4H5.500z" fill="#fff" /></svg>
          <svg width="17" height="13" viewBox="0 0 17 13" fill="none" stroke="#fff"><path d="M1 4.500h2.500L7 1v11L3.500 8.500H1z" /><path d="M9 5q1 1.500 0 3" /><path d="M11 3.500q2 3 0 6M13.500 2q3 4.500 0 9" stroke="#84959d" /></svg>
          <Language>VIE</Language>
          <Clock>11:46 AM<br />3/8/2019</Clock>
          <svg width="16" height="16" fill="none" stroke="#fff"><path d="M.5.5h15v11.500h-5L8 15l-2.500-3h-5z" /></svg>
          <TrayEnd />
        </Tray>
      </Taskbar>
    </Screen>
  );
}
